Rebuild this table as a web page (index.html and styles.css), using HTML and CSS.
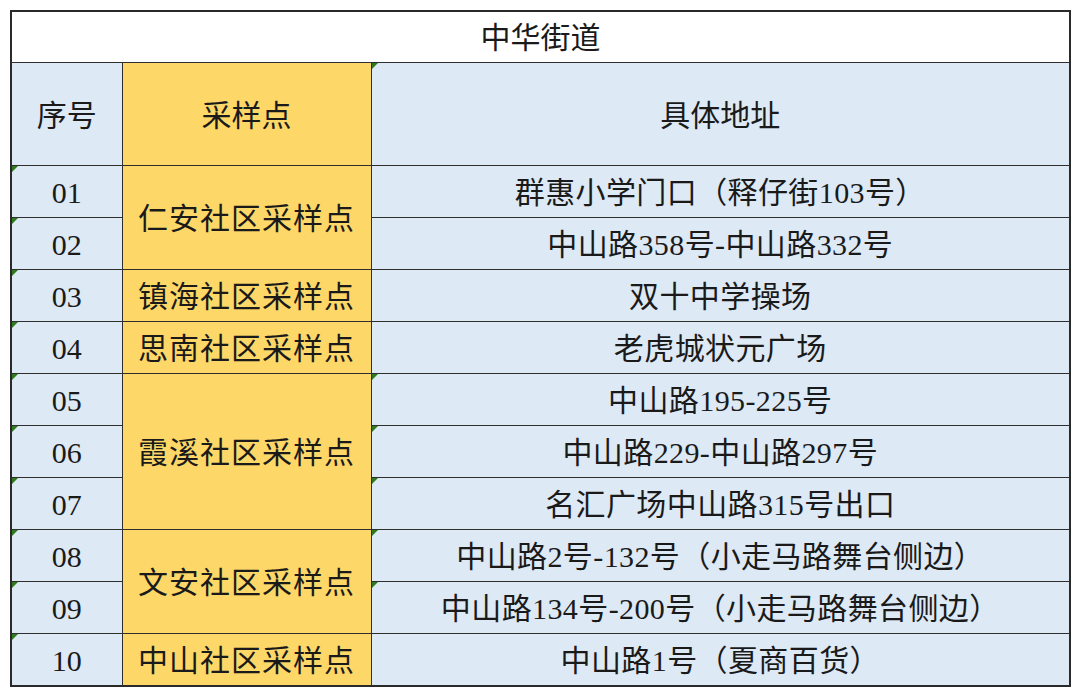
FILE: index.html
```html
<!DOCTYPE html>
<html lang="zh-CN">
<head>
<meta charset="utf-8">
<title>中华街道</title>
<link rel="stylesheet" href="styles.css">
</head>
<body>
<table class="sheet">
  <colgroup>
    <col class="c-no">
    <col class="c-site">
    <col class="c-addr">
  </colgroup>
  <tr class="row-title"><td colspan="3" class="title">中华街道</td></tr>
  <tr class="row-head">
    <td class="blue head">序号</td>
    <td class="yellow head">采样点</td>
    <td class="blue head mark">具体地址</td>
  </tr>
  <tr class="row">
    <td class="blue num mark">01</td>
    <td class="yellow site" rowspan="2">仁安社区采样点</td>
    <td class="blue addr">群惠小学门口（释仔街103号）</td>
  </tr>
  <tr class="row">
    <td class="blue num mark">02</td>
    <td class="blue addr">中山路358号-中山路332号</td>
  </tr>
  <tr class="row">
    <td class="blue num mark">03</td>
    <td class="yellow site">镇海社区采样点</td>
    <td class="blue addr">双十中学操场</td>
  </tr>
  <tr class="row">
    <td class="blue num mark">04</td>
    <td class="yellow site">思南社区采样点</td>
    <td class="blue addr">老虎城状元广场</td>
  </tr>
  <tr class="row">
    <td class="blue num mark">05</td>
    <td class="yellow site" rowspan="3">霞溪社区采样点</td>
    <td class="blue addr mark">中山路195-225号</td>
  </tr>
  <tr class="row">
    <td class="blue num mark">06</td>
    <td class="blue addr mark">中山路229-中山路297号</td>
  </tr>
  <tr class="row">
    <td class="blue num mark">07</td>
    <td class="blue addr mark">名汇广场中山路315号出口</td>
  </tr>
  <tr class="row">
    <td class="blue num mark">08</td>
    <td class="yellow site" rowspan="2">文安社区采样点</td>
    <td class="blue addr mark">中山路2号-132号（小走马路舞台侧边）</td>
  </tr>
  <tr class="row">
    <td class="blue num mark">09</td>
    <td class="blue addr mark">中山路134号-200号（小走马路舞台侧边）</td>
  </tr>
  <tr class="row">
    <td class="blue num mark">10</td>
    <td class="yellow site">中山社区采样点</td>
    <td class="blue addr">中山路1号（夏商百货）</td>
  </tr>
</table>
</body>
</html>
```

FILE: styles.css
```css
html, body {
  margin: 0;
  padding: 0;
  background: #ffffff;
}

body {
  padding: 10px 0 0 10px;
  font-family: "Liberation Serif", "Noto Sans CJK SC", serif;
  color: #1a1a1a;
}

.sheet {
  border-collapse: collapse;
  table-layout: fixed;
  width: 1059px;
  border: 2px solid #2a2a2a;
}

.c-no { width: 111px; }
.c-site { width: 249px; }
.c-addr { width: 699px; }

.sheet td {
  border: 1.5px solid #2e2e2e;
  text-align: center;
  vertical-align: middle;
  padding: 0;
  position: relative;
  white-space: nowrap;
  font-size: 30px;
  line-height: 1;
}

.row-title td { height: 48px; padding-top: 2px; }
.row-head td { height: 98px; padding-top: 4px; }
.row td { height: 48px; padding-top: 3px; }

.title {
  background: #ffffff;
  font-size: 31px;
}

.head {
  font-size: 31px;
}

.blue { background: #dde9f5; }
.yellow { background: #fdd767; }

.num {
  font-size: 30px;
}

.site {
  letter-spacing: 1px;
}

.addr {
  letter-spacing: 0.4px;
}

.mark::before {
  content: "";
  position: absolute;
  left: 0;
  top: 0;
  width: 0;
  height: 0;
  border-top: 6px solid #2f7a1f;
  border-right: 6px solid transparent;
}
```
